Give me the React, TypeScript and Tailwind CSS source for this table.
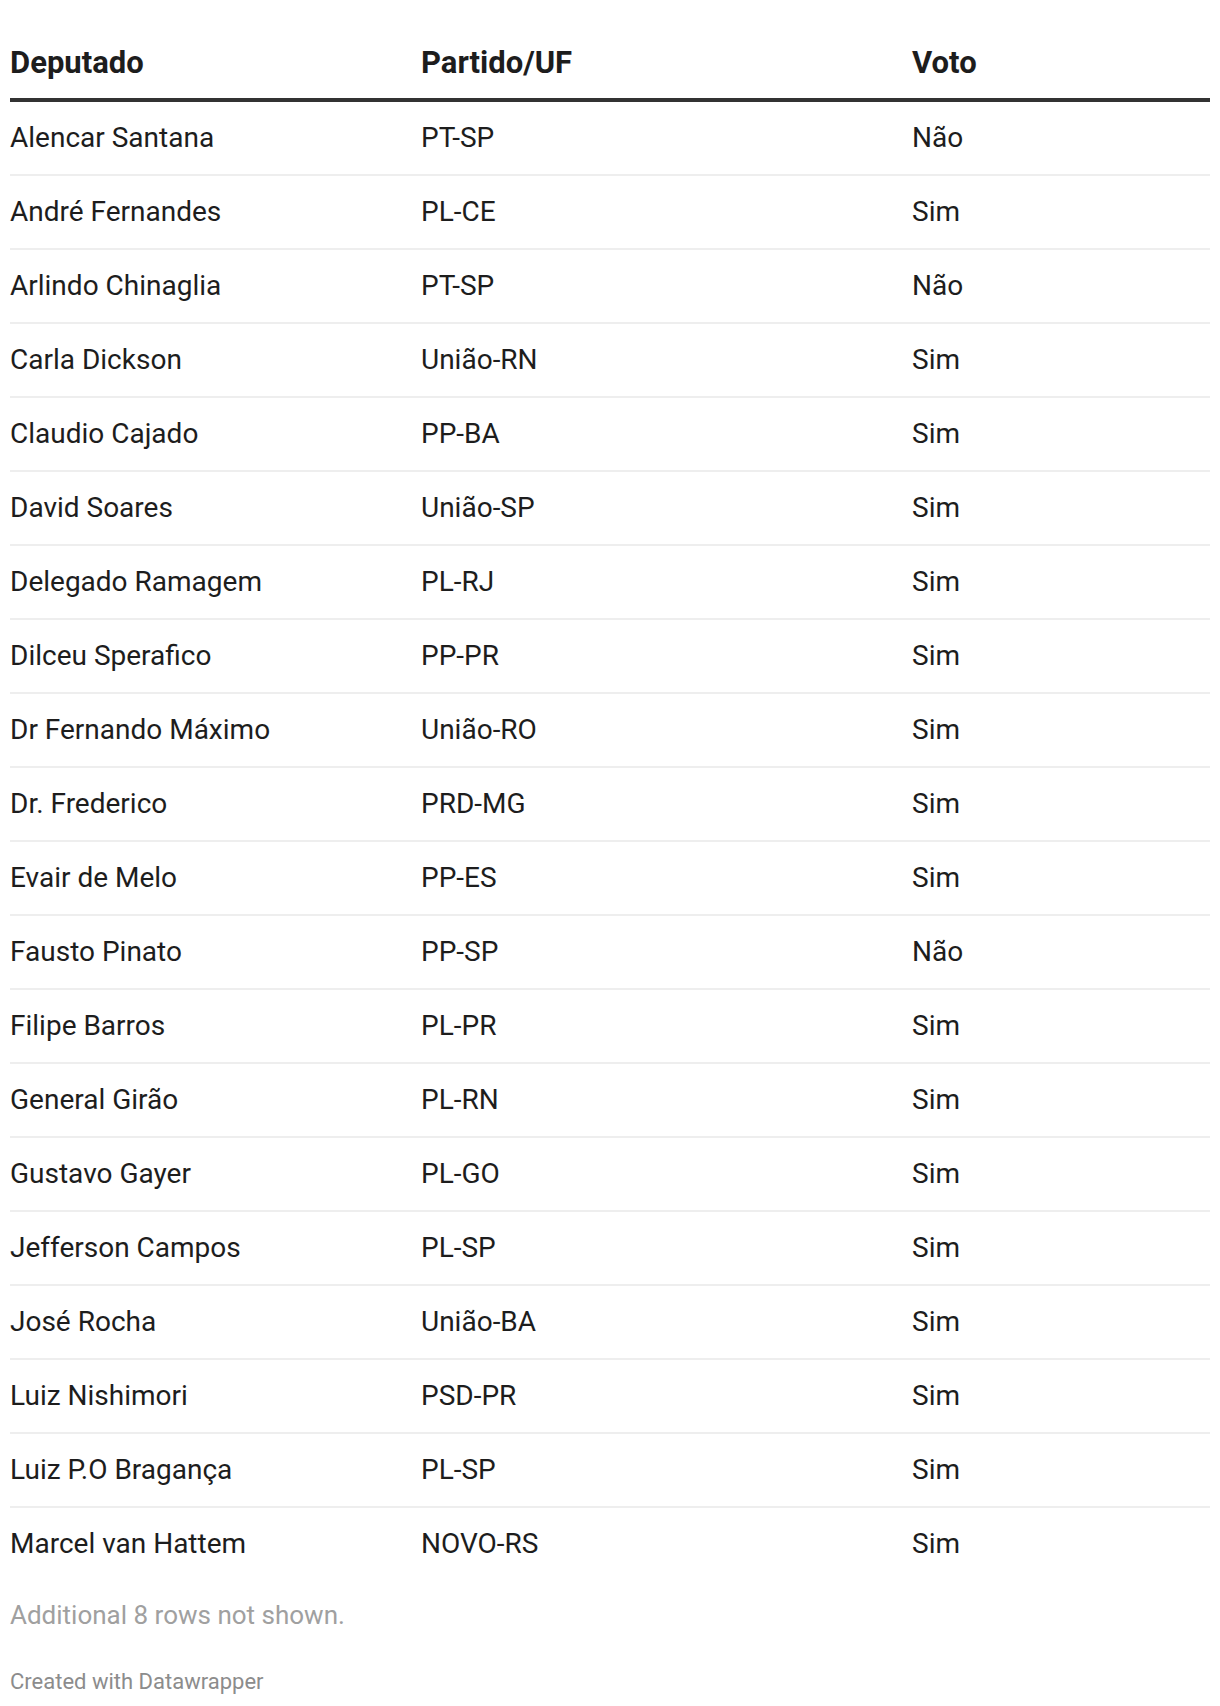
import React from "react";

const rows: [string, string, string][] = [
  ["Alencar Santana", "PT-SP", "Não"],
  ["André Fernandes", "PL-CE", "Sim"],
  ["Arlindo Chinaglia", "PT-SP", "Não"],
  ["Carla Dickson", "União-RN", "Sim"],
  ["Claudio Cajado", "PP-BA", "Sim"],
  ["David Soares", "União-SP", "Sim"],
  ["Delegado Ramagem", "PL-RJ", "Sim"],
  ["Dilceu Sperafico", "PP-PR", "Sim"],
  ["Dr Fernando Máximo", "União-RO", "Sim"],
  ["Dr. Frederico", "PRD-MG", "Sim"],
  ["Evair de Melo", "PP-ES", "Sim"],
  ["Fausto Pinato", "PP-SP", "Não"],
  ["Filipe Barros", "PL-PR", "Sim"],
  ["General Girão", "PL-RN", "Sim"],
  ["Gustavo Gayer", "PL-GO", "Sim"],
  ["Jefferson Campos", "PL-SP", "Sim"],
  ["José Rocha", "União-BA", "Sim"],
  ["Luiz Nishimori", "PSD-PR", "Sim"],
  ["Luiz P.O Bragança", "PL-SP", "Sim"],
  ["Marcel van Hattem", "NOVO-RS", "Sim"],
];

export default function App() {
  return (
    <div
      className="bg-white w-[1220px] h-[1706px] px-[10px] text-[#1d1d1d]"
      style={{ fontFamily: "Roboto, 'Liberation Sans', sans-serif" }}
    >
      <div className="w-[1200px]">
        <div className="grid grid-cols-[411px_491px_298px] h-[82px] items-end pb-[16px] border-b-[4px] border-[#333333] box-content text-[31px] leading-[38px] font-bold">
          <div>Deputado</div>
          <div>Partido/UF</div>
          <div>Voto</div>
        </div>
        {rows.map((r, i) => (
          <div
            key={i}
            className={
              i < rows.length - 1
                ? "grid grid-cols-[411px_491px_298px] h-[72px] items-center text-[28px] leading-[36px] border-b-2 border-[#eeeeee] box-content"
                : "grid grid-cols-[411px_491px_298px] h-[72px] items-center text-[28px] leading-[36px]"
            }
          >
            <div>{r[0]}</div>
            <div>{r[1]}</div>
            <div>{r[2]}</div>
          </div>
        ))}
        <div className="mt-[18px] text-[26px] leading-[34px] text-[#a0a0a0]">
          Additional 8 rows not shown.
        </div>
        <div className="mt-[35px] text-[22px] leading-[29px] text-[#8c8c8c]">
          Created with Datawrapper
        </div>
      </div>
    </div>
  );
}
